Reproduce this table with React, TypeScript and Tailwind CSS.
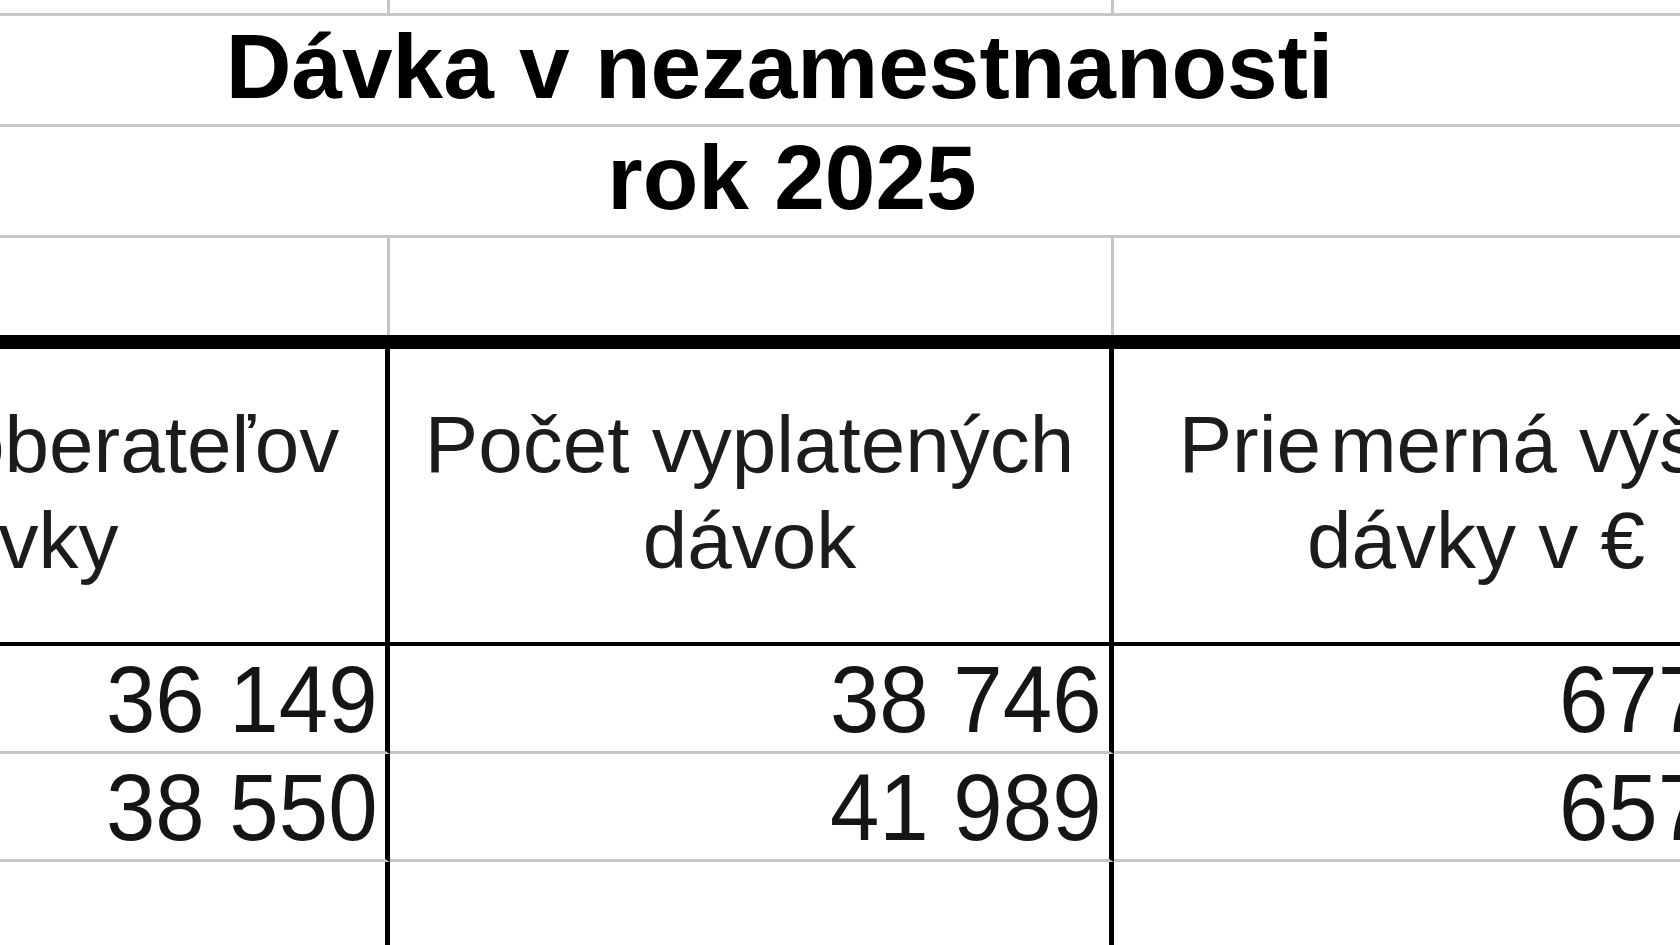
import React from 'react';

// Excel-like grid crop: column A runs off the left edge, column C off the right
const COLS = 'grid grid-cols-[747px_724px_724px]';

type DataRow = { a: string; b: string; c: string };

const DATA: DataRow[] = [
  { a: '36 149', b: '38 746', c: '677,39' },
  { a: '38 550', b: '41 989', c: '657,21' },
];

function Num({ value }: { value: string }) {
  return (
    <span className="inline-block origin-right scale-x-[0.935] whitespace-nowrap text-[95px] leading-none text-[#151515]">
      {value}
    </span>
  );
}

function GrayRow({ height }: { height: string }) {
  return (
    <div className={`${COLS} ${height}`}>
      <div className="border-r-[3px] border-b-[3px] border-[#c6c6c6]" />
      <div className="border-r-[3px] border-b-[3px] border-[#c6c6c6]" />
      <div className="border-b-[3px] border-[#c6c6c6]" />
    </div>
  );
}

function TitleRow({ children, extra }: { children: React.ReactNode; extra?: string }) {
  return (
    <div className="flex h-[111px] items-end justify-center border-b-[3px] border-[#c6c6c6] pb-[12px] pl-[103px]">
      <span className={`whitespace-pre text-[91px] font-bold leading-none text-black ${extra ?? ''}`}>
        {children}
      </span>
    </div>
  );
}

export default function App() {
  return (
    <div className="h-[945px] w-[1680px] overflow-hidden bg-white font-['Liberation_Sans',Arial,sans-serif]">
      <div className="-ml-[357px] w-[2195px]">
        <GrayRow height="h-[16px]" />

        <TitleRow extra="pr-[25px]">Dávka v nezamestnanosti</TitleRow>
        <TitleRow>rok 2025</TitleRow>

        {/* empty row above the thick border */}
        <div className={`${COLS} h-[111px] border-b-[14px] border-black`}>
          <div className="border-r-[3px] border-[#c6c6c6]" />
          <div className="border-r-[3px] border-[#c6c6c6]" />
          <div />
        </div>

        {/* header */}
        <div className={`${COLS} h-[297px] border-b-[4px] border-black text-[80px] leading-[96px] text-[#1c1c1c]`}>
          <div className="flex flex-col items-center justify-center border-r-[5px] border-black pb-[6px] whitespace-nowrap">
            <span>Počet poberateľov</span>
            <span>dávky</span>
          </div>
          <div className="flex flex-col items-center justify-center border-r-[5px] border-black pb-[6px] whitespace-nowrap">
            <span>Počet vyplatených</span>
            <span>dávok</span>
          </div>
          <div className="flex flex-col items-center justify-center pb-[6px] whitespace-nowrap">
            <span className="pl-[10px]">
              Prie<span className="ml-[9px]">merná výška</span>
            </span>
            <span>dávky v €</span>
          </div>
        </div>

        {DATA.map((row) => (
          <div key={row.a} className={`${COLS} h-[108px]`}>
            <div className="flex items-end justify-end border-r-[5px] border-b-[3px] border-r-black border-b-[#c6c6c6] pr-[7px] pb-[4px]">
              <Num value={row.a} />
            </div>
            <div className="flex items-end justify-end border-r-[5px] border-b-[3px] border-r-black border-b-[#c6c6c6] pr-[7px] pb-[4px]">
              <Num value={row.b} />
            </div>
            <div className="flex items-end justify-end border-b-[3px] border-[#c6c6c6] pr-[7px] pb-[4px]">
              <Num value={row.c} />
            </div>
          </div>
        ))}

        <div className={`${COLS} h-[120px]`}>
          <div className="border-r-[5px] border-black" />
          <div className="border-r-[5px] border-black" />
          <div />
        </div>
      </div>
    </div>
  );
}
